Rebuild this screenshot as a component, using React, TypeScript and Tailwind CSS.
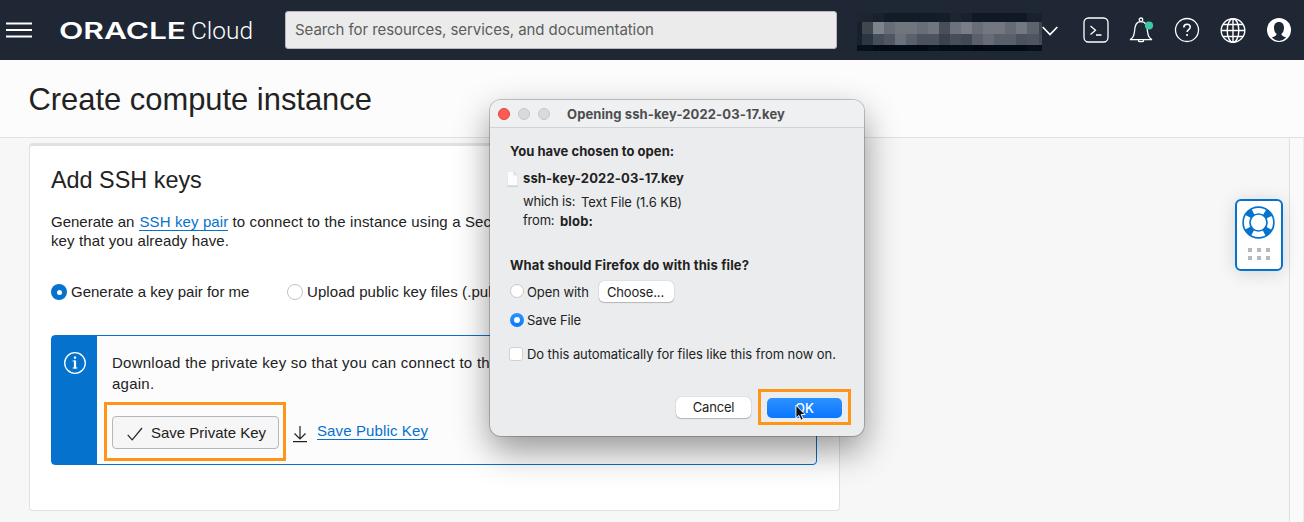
import React from 'react';

type Tile = [number, string];

const ROWS: { h: number; tiles: Tile[] }[] = [
  { h: 9, tiles: [[16, '#1c2530'], [11, '#18222d'], [55, '#121b28'], [11, '#141d29'], [11, '#1c2530'], [11, '#18212d'], [55, '#101828'], [15, '#18222d']] },
  { h: 12, tiles: [[5, '#18202b'], [11, '#3f4751'], [11, '#7e848c'], [11, '#666d76'], [22, '#71767e'], [11, '#686e77'], [11, '#71767e'], [11, '#484f5a'], [11, '#6e727c'], [11, '#7a7d86'], [11, '#686e77'], [22, '#737880'], [11, '#646b75'], [11, '#747981'], [12, '#5c646e'], [3, '#3d4650']] },
  { h: 11, tiles: [[5, '#18202b'], [11, '#2c3541'], [11, '#454d58'], [11, '#505762'], [11, '#6a717a'], [11, '#59616b'], [22, '#4c535e'], [11, '#3b424e'], [11, '#474e59'], [11, '#424955'], [11, '#59606c'], [11, '#666b75'], [22, '#5a606b'], [11, '#4c535e'], [12, '#50565f'], [3, '#444b55']] },
  { h: 6, tiles: [[16, '#07111e'], [55, '#020c19'], [11, '#06101d'], [33, '#030c19'], [11, '#000915'], [44, '#020c19'], [15, '#07111d']] },
];

function Mosaic() {
  return (
    <div className="flex w-[185px] flex-col" aria-hidden="true">
      {ROWS.map((r, i) => (
        <div key={i} className="flex" style={{ height: r.h }}>
          {r.tiles.map(([w, c], j) => (
            <div key={j} style={{ width: w, backgroundColor: c }} />
          ))}
        </div>
      ))}
    </div>
  );
}

function Logo() {
  return (
    <svg className="ml-7 h-[30px] w-[197px] shrink-0" viewBox="0 0 197 30" fill="#fff">
      <text x="-1" y="23.500" fontFamily="Inter, sans-serif" fontWeight="600" fontSize="23" textLength="127" lengthAdjust="spacingAndGlyphs">ORACLE</text>
      <text x="131" y="23.500" fontFamily="Roboto, sans-serif" fontWeight="300" fontSize="24" textLength="62" lengthAdjust="spacingAndGlyphs">Cloud</text>
    </svg>
  );
}

function TopBar() {
  return (
    <header className="flex h-[60px] shrink-0 items-center bg-[#1e2733] text-white">
      <svg className="ml-1.5 h-[17px] w-[26px] shrink-0" viewBox="0 0 26 17" stroke="#fff" strokeWidth="2">
        <path d="M0 1.500h26M0 8h26M0 14.500h26" />
      </svg>
      <Logo />
      <div className="ml-7 flex h-[38px] w-[552px] shrink-0 items-center rounded-[3px] border border-[#b5bac1] bg-[#ebebeb] px-[9px] pt-px font-['Inter',sans-serif] text-[15px] tracking-[-0.07px] text-[#5c5c5c]">
        <span className="whitespace-nowrap">Search for resources, services, and documentation</span>
      </div>
      <div className="ml-5 mt-1 flex shrink-0"><Mosaic /></div>
      <svg className="mt-[2px] h-3 w-4 shrink-0" viewBox="0 0 16 12" fill="none" stroke="#fff" strokeWidth="1.700">
        <path d="M.7 2 8 9.500 15.300 2" />
      </svg>
      <svg className="ml-[25px] size-[26px] shrink-0" viewBox="0 0 26 26" fill="none" stroke="#fff" strokeWidth="1.300">
        <rect x="1" y="1" width="24" height="24" rx="4.500" />
        <path d="m7.500 9 5 4.200-5 4.200M13 18h5.500" />
      </svg>
      <svg className="ml-5 size-[26px] shrink-0" viewBox="0 0 26 26" fill="none" stroke="#fff" strokeWidth="1.300">
        <circle cx="12" cy="2.800" r="1.800" />
        <path d="M1.500 22.300c2.500-1.300 3.500-3.500 3.900-7.300C6 8.500 7 4.600 12 4.600s6 3.900 6.600 10.400c.4 3.800 1.400 6 3.900 7.300v.4h-21zM9.500 22.700v1q0 1 1.300 1h2.400q1.300 0 1.300-1v-1" />
        <circle cx="20" cy="8.500" r="4.100" fill="#3bc9a7" stroke="none" />
      </svg>
      <svg className="ml-[19px] size-[26px] shrink-0" viewBox="0 0 26 26" fill="none" stroke="#fff" strokeWidth="1.300">
        <circle cx="13" cy="13" r="11.500" />
        <path strokeWidth="1.600" d="M9.800 10.500c0-4.300 6.500-4.200 6.500-.4 0 2.500-3.200 2.500-3.200 5M13.100 17v2" />
      </svg>
      <svg className="ml-5 size-[26px] shrink-0" viewBox="0 0 26 26" fill="none" stroke="#fff" strokeWidth="1.400">
        <circle cx="13" cy="13.500" r="11.800" />
        <ellipse cx="13" cy="13.500" rx="5.800" ry="11.800" />
        <path d="M13 1.500v24M1 13.500h24M3 7.500h20M3 19.500h20" />
      </svg>
      <svg className="ml-5 size-[26px] shrink-0" viewBox="0 0 26 26">
        <circle cx="13" cy="13" r="12" fill="#fff" />
        <path fill="#1e2733" d="M13 5c-3.300 0-5 2.400-5 5.700 0 3 1.200 5.300 2.700 6.300-.2 1.700-2 2.300-4.900 3.600A11 11 0 0 0 13 24a11 11 0 0 0 7.200-3.400c-2.900-1.300-4.700-1.900-4.900-3.600 1.500-1 2.700-3.300 2.700-6.300C18 7.400 16.300 5 13 5z" />
      </svg>
    </header>
  );
}

function HelpWidget() {
  return (
    <div className="absolute left-[1235px] top-[199px] flex h-[72px] w-12 flex-col items-center rounded-md border-2 border-[#0572ce] bg-white pt-[5px] shadow-[0_2px_18px_rgba(0,0,0,0.14)]">
      <svg className="mr-px size-[33px]" viewBox="0 0 34 34" fill="none" stroke="#0572ce">
        <circle cx="17" cy="17" r="15.900" strokeWidth="1.700" />
        <circle cx="17" cy="17" r="12.500" strokeWidth="7" strokeDasharray="7 12.635" strokeDashoffset="-6.317" />
        <circle cx="17" cy="17" r="8.800" strokeWidth="1.700" />
      </svg>
      <div className="mt-[9px] grid grid-cols-3 gap-x-[5px] gap-y-1">
        {[0, 1, 2, 3, 4, 5].map((i) => (
          <div key={i} className="size-[4px] bg-[#b3b8c3]" />
        ))}
      </div>
    </div>
  );
}

function Dialog() {
  return (
    <section className="absolute left-[490px] top-[100px] flex h-[336px] w-[374px] flex-col whitespace-nowrap rounded-[11px] bg-[#ebecee] font-['Inter',sans-serif] text-[13px] leading-4 tracking-[-0.07px] text-[#222] shadow-[0_0_0_1px_rgba(0,0,0,0.2),0_14px_35px_rgba(0,0,0,0.42)]">
      <div className="flex h-7 shrink-0 items-center rounded-t-[11px] border-b border-[#d2d3d5] bg-[#eff0f2] pl-2">
        <div className="flex gap-2">
          <span className="size-3 rounded-full border border-[#df453f] bg-[#ff5b54]" />
          <span className="size-3 rounded-full border border-[#c7c8ca] bg-[#d9dadc]" />
          <span className="size-3 rounded-full border border-[#c7c8ca] bg-[#d9dadc]" />
        </div>
        <h2 className="ml-[17px] font-bold tracking-[0.11px] text-[#4c4d4f]">Opening ssh-key-2022-03-17.key</h2>
      </div>
      <div className="flex flex-col pl-5">
        <p className="mt-[15px] font-bold tracking-[0.05px]">You have chosen to open:</p>
        <div className="-ml-[3px] mt-[11px] flex items-center">
          <svg className="h-[15px] w-[11px] drop-shadow-[0_1px_0_rgba(0,0,0,0.15)]" viewBox="0 0 11 15" fill="#fcfcfc" stroke="#dedede" strokeWidth=".5">
            <path d="M.3.300h6.400l4 4v10.300H.3zM6.700.300v4h4" />
          </svg>
          <span className="ml-[5px] font-bold tracking-[0.15px]">ssh-key-2022-03-17.key</span>
        </div>
        <div className="ml-[13px] mt-[7px] flex">
          <span className="w-[52px] tracking-[-0.2px]">which is:</span>
          <span className="ml-1.5 mt-px">Text File (1.6 KB)</span>
        </div>
        <div className="ml-[13px] mt-0.5 flex">
          <span className="w-[31px] tracking-[-0.2px]">from:</span>
          <span className="ml-1.5 mt-px font-bold tracking-[0.15px]">blob:</span>
        </div>
        <p className="mt-7 font-bold tracking-[0.13px]">What should Firefox do with this file?</p>
        <div className="mt-2 flex items-center">
          <span className="mb-px size-[14px] rounded-full border border-[#c8c9cb] bg-white" />
          <span className="ml-[3px] w-[62px]">Open with</span>
          <button className="ml-[10px] flex h-[21px] w-[75px] items-center justify-center rounded-[5px] bg-white pr-0.5 tracking-[-0.15px] shadow-[0_0_1px_rgba(0,0,0,0.4),0_1px_1px_rgba(0,0,0,0.2)]">Choose...</button>
        </div>
        <div className="mt-[9px] flex items-center">
          <span className="flex size-[14px] items-center justify-center rounded-full bg-linear-to-b from-[#2b92ff] to-[#057aff]"><span className="size-[6px] rounded-full bg-white" /></span>
          <span className="ml-[3px] mt-px tracking-[-0.15px]">Save File</span>
        </div>
        <div className="-ml-px mt-[17px] flex items-center">
          <span className="size-[14px] rounded-[3px] border border-[#d0d1d3] bg-white" />
          <span className="ml-1 mt-px">Do this automatically for files like this from now on.</span>
        </div>
      </div>
      <div className="mt-[27px] flex items-center pl-[186px]">
        <button className="flex h-[21px] w-[75px] items-center justify-center rounded-[5px] bg-white tracking-[-0.2px] shadow-[0_0_1px_rgba(0,0,0,0.4),0_1px_1px_rgba(0,0,0,0.2)]">Cancel</button>
        <div className="ml-[7px] flex h-9 w-[93px] items-center justify-center border-[3px] border-[#ff9518]">
          <button className="relative mt-px flex h-5 w-[75px] items-center justify-center rounded-[5px] bg-linear-to-b from-[#2d91ff] to-[#0676ff] font-medium text-white">
            <span>OK</span>
            <svg className="absolute left-[28px] top-[6px] h-[19px] w-[12px]" viewBox="0 0 13 20" fill="#111" stroke="#fff">
              <path d="M1 1v14l3.200-3 2.300 5.300 2.500-1.100-2.300-5.100H11z" />
            </svg>
          </button>
        </div>
      </div>
    </section>
  );
}

function InfoBanner() {
  return (
    <div className="mt-[33px] flex h-[130px] w-[766px] rounded border border-[#0572ce] bg-[#fcfcfc]">
      <div className="flex w-[45px] shrink-0 justify-center bg-[#0572ce] pt-4">
        <svg className="size-[22px]" viewBox="0 0 22 22" fill="none" stroke="#fff">
          <circle cx="11" cy="11" r="10.300" strokeWidth="1.300" />
          <path strokeWidth="2.200" d="M11 4.500v2.200M11 8.500v8" />
          <path strokeWidth="1" d="M8.600 9h2.400M8.600 16h4.800" />
        </svg>
      </div>
      <div className="flex flex-col pl-[15px] pt-4">
        <p className="leading-[21px] tracking-[0.25px]">
          Download the private key so that you can connect to the instance<br />again.
        </p>
        <div className="-ml-2 mt-2 flex items-center">
          <div className="flex h-[59px] w-[182px] items-center border-[3px] border-[#ff9518] pl-[5px] pt-0.5">
            <button className="flex h-[33px] w-[167px] items-center rounded border border-[#b2b7c0] bg-[#f6f6f6] pl-[14px]">
              <svg className="mt-0.5 h-4 w-4" viewBox="0 0 16 16" fill="none" stroke="#222" strokeWidth="1.200"><path d="m.7 8.800 4.500 5L15 2" /></svg>
              <span className="ml-2 mt-0.5">Save Private Key</span>
            </button>
          </div>
          <svg className="ml-1.5 mt-1 h-[18px] w-4" viewBox="0 0 16 18" fill="none" stroke="#222" strokeWidth="1.200"><path d="M8 1v13M2.500 8.500 8 14l5.500-5.500M1 16.700h14" /></svg>
          <a className="ml-[9px] border-b border-[#0572ce] leading-4 tracking-[0.12px] text-[#0572ce]">Save Public Key</a>
        </div>
      </div>
    </div>
  );
}

export default function App() {
  return (
    <div className="relative flex h-[522px] w-[1304px] flex-col overflow-hidden whitespace-nowrap bg-[#f7f7f7] font-['Liberation_Sans',Arial,sans-serif] text-[#222]">
      <TopBar />
      <div className="flex h-[78px] shrink-0 items-center border-b border-[#e1e1e3] bg-[#fcfcfc] pl-[28.5px] pt-0.5">
        <h1 className="text-[30.9px] leading-9">Create compute instance</h1>
      </div>
      <div className="flex min-h-0 grow">
        <div className="w-[1290px] shrink-0 border-r border-[#e0e0e0] pl-[29px] pt-[5px]">
          <main className="flex h-[368px] w-[811px] flex-col rounded border border-t-[3px] border-[#e1e1e5] bg-white pl-[21px] text-[15px]">
            <h2 className="mt-5 text-[23.4px] leading-7">Add SSH keys</h2>
            <p className="mt-[18px] flex items-start leading-[19px]">
              <span>Generate an</span>
              <a className="ml-[5px] border-b border-[#0572ce] pt-px leading-[17px] tracking-[0.12px] text-[#0572ce]">SSH key pair</a>
              <span className="ml-1 tracking-[0.14px]">to connect to the instance using a Secure</span>
            </p>
            <p className="leading-[19px] tracking-[0.11px]">key that you already have.</p>
            <div className="mt-8 flex h-5 items-center">
              <span className="flex size-4 items-center justify-center rounded-full bg-[#0572ce]"><span className="size-[5px] rounded-full bg-white" /></span>
              <span className="ml-1 w-[178px]">Generate a key pair for me</span>
              <span className="ml-[38px] size-4 rounded-full border border-[#bfc4cc] bg-white" />
              <span className="ml-1 tracking-[0.07px]">Upload public key files (.pub)</span>
            </div>
            <InfoBanner />
          </main>
        </div>
        <div className="grow border-r border-[#ececec] bg-[#fafafa]" />
      </div>
      <HelpWidget />
      <Dialog />
    </div>
  );
}
